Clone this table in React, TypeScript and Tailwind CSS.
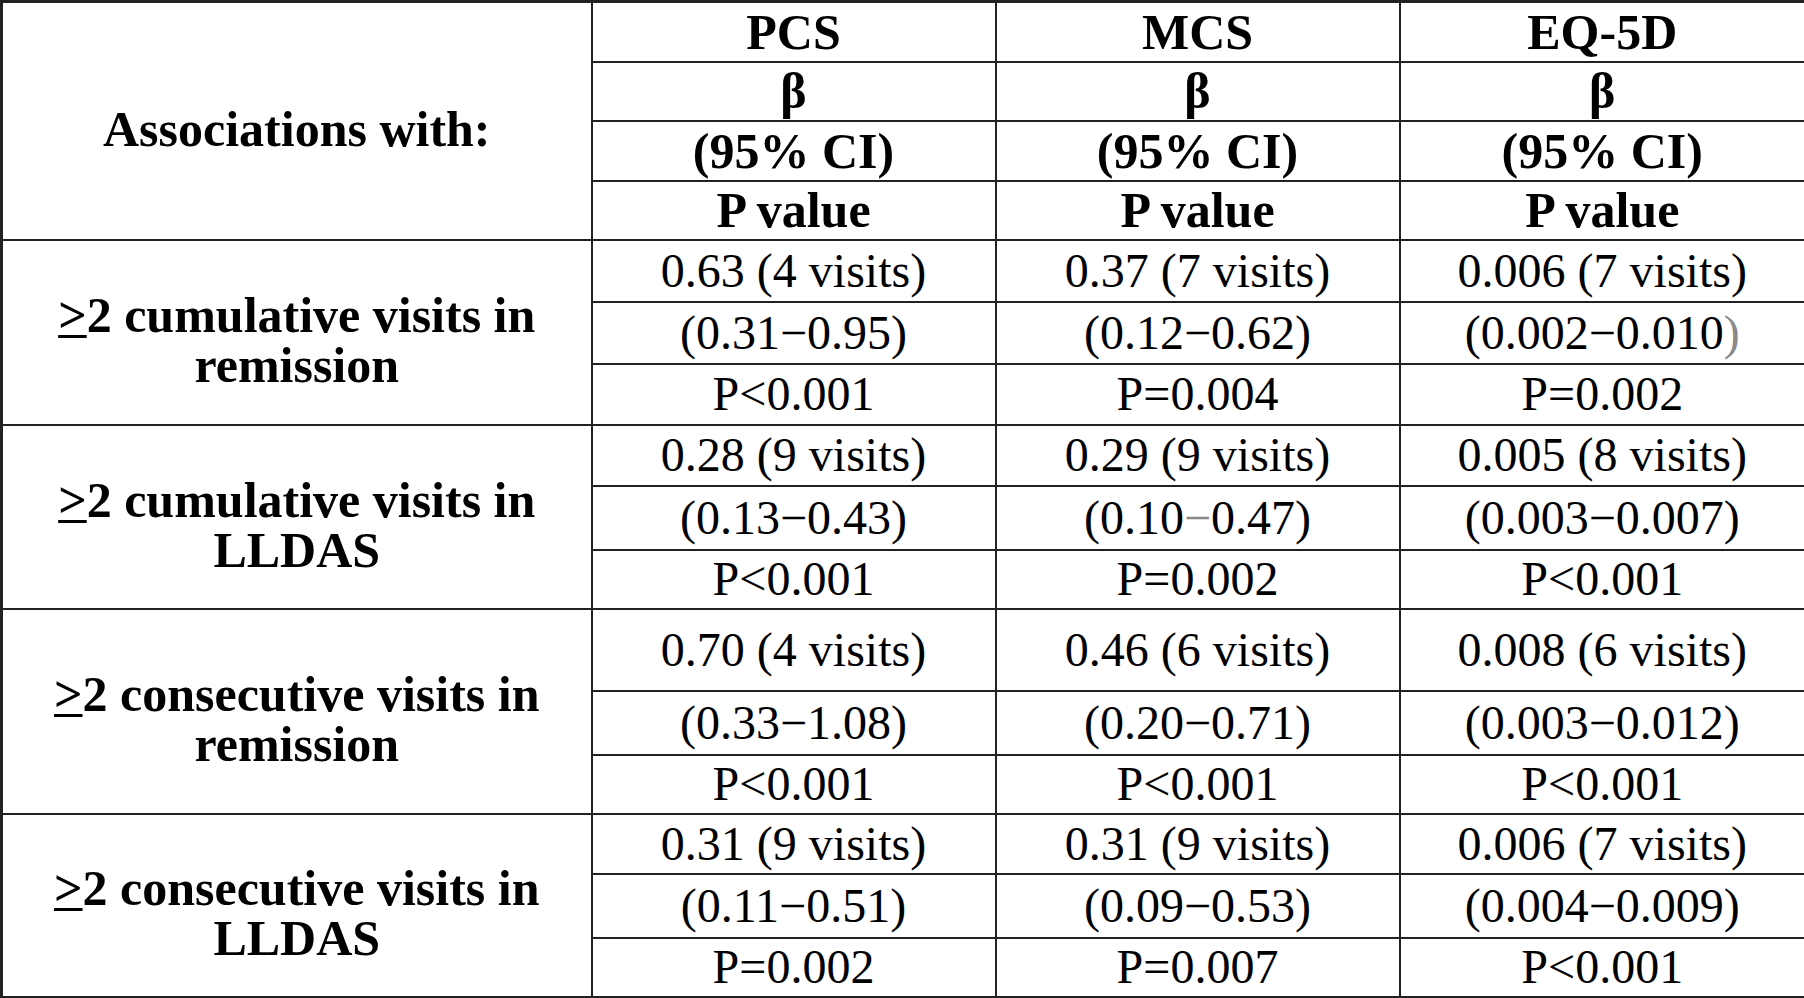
const serif = "font-['Liberation_Serif','Times_New_Roman',serif]";

type Group = {
  label: React.ReactNode;
  heights: [number, number, number];
  rows: React.ReactNode[][];
};

const Ge = () => (
  <span className="underline decoration-[3px] underline-offset-[3px]">&gt;</span>
);

const groups: Group[] = [
  {
    label: (
      <>
        <Ge />2 cumulative visits in
        <br />
        remission
      </>
    ),
    heights: [62, 62, 61],
    rows: [
      ['0.63 (4 visits)', '0.37 (7 visits)', '0.006 (7 visits)'],
      [
        '(0.31−0.95)',
        '(0.12−0.62)',
        <>
          (0.002−0.010<span className="text-[#8a8a8a]">)</span>
        </>,
      ],
      ['P<0.001', 'P=0.004', 'P=0.002'],
    ],
  },
  {
    label: (
      <>
        <Ge />2 cumulative visits in
        <br />
        LLDAS
      </>
    ),
    heights: [61, 64, 59],
    rows: [
      ['0.28 (9 visits)', '0.29 (9 visits)', '0.005 (8 visits)'],
      [
        '(0.13−0.43)',
        <>
          (0.10<span className="text-[#8a8a8a]">−</span>0.47)
        </>,
        '(0.003−0.007)',
      ],
      ['P<0.001', 'P=0.002', 'P<0.001'],
    ],
  },
  {
    label: (
      <>
        <Ge />2 consecutive visits in
        <br />
        remission
      </>
    ),
    heights: [82, 64, 59],
    rows: [
      ['0.70 (4 visits)', '0.46 (6 visits)', '0.008 (6 visits)'],
      ['(0.33−1.08)', '(0.20−0.71)', '(0.003−0.012)'],
      ['P<0.001', 'P<0.001', 'P<0.001'],
    ],
  },
  {
    label: (
      <>
        <Ge />2 consecutive visits in
        <br />
        LLDAS
      </>
    ),
    heights: [60, 64, 60],
    rows: [
      ['0.31 (9 visits)', '0.31 (9 visits)', '0.006 (7 visits)'],
      ['(0.11−0.51)', '(0.09−0.53)', '(0.004−0.009)'],
      ['P=0.002', 'P=0.007', 'P<0.001'],
    ],
  },
];

const headerRows = [
  { h: 60, cells: ['PCS', 'MCS', 'EQ-5D'] },
  { h: 59, cells: ['β', 'β', 'β'] },
  { h: 60, cells: ['(95% CI)', '(95% CI)', '(95% CI)'] },
  { h: 59, cells: ['P value', 'P value', 'P value'] },
];

const cell = 'border-2 border-[#222] p-0 text-center align-middle';

export default function App() {
  return (
    <div className={`w-[1804px] h-[998px] bg-white text-black overflow-hidden ${serif}`}>
      <table className="table-fixed border-collapse w-[1804px] border-[3px] border-[#222]">
        <colgroup>
          <col className="w-[590px]" />
          <col className="w-[404px]" />
          <col className="w-[404px]" />
          <col className="w-[406px]" />
        </colgroup>
        <thead>
          {headerRows.map((row, i) => (
            <tr key={i} style={{ height: row.h }}>
              {i === 0 && (
                <th
                  rowSpan={4}
                  className={`${cell} pt-4 text-[50px] leading-[50px] font-bold`}
                >
                  Associations with:
                </th>
              )}
              {row.cells.map((c, j) => (
                <th key={j} className={`${cell} text-[50px] leading-[50px] font-bold`}>
                  {c}
                </th>
              ))}
            </tr>
          ))}
        </thead>
        <tbody>
          {groups.map((g, gi) =>
            g.rows.map((row, ri) => (
              <tr key={`${gi}-${ri}`} style={{ height: g.heights[ri] }}>
                {ri === 0 && (
                  <td
                    rowSpan={3}
                    className={`${cell} pt-4 text-[50px] leading-[50px] font-bold`}
                  >
                    {g.label}
                  </td>
                )}
                {row.map((c, j) => (
                  <td key={j} className={`${cell} text-[48px] leading-[48px]`}>
                    {c}
                  </td>
                ))}
              </tr>
            ))
          )}
        </tbody>
      </table>
    </div>
  );
}
